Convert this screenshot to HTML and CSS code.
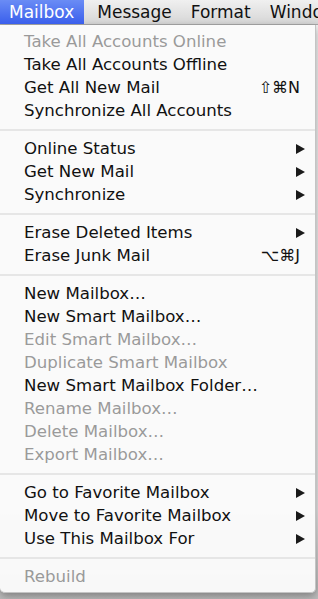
FILE: index.html
```html
<!DOCTYPE html>
<html>
<head>
<meta charset="utf-8">
<link rel="stylesheet" href="styles.css">
</head>
<body>
<div class="menubar">
  <div class="mb-item active">Mailbox</div>
  <div class="mb-item">Message</div>
  <div class="mb-item">Format</div>
  <div class="mb-item">Window</div>
</div>
<div class="menu">
  <div class="row dis"><span>Take All Accounts Online</span></div>
  <div class="row"><span>Take All Accounts Offline</span></div>
  <div class="row"><span>Get All New Mail</span><span class="key">⇧⌘N</span></div>
  <div class="row"><span>Synchronize All Accounts</span></div>
  <div class="sep"></div>
  <div class="row"><span>Online Status</span><span class="arr"></span></div>
  <div class="row"><span>Get New Mail</span><span class="arr"></span></div>
  <div class="row"><span>Synchronize</span><span class="arr"></span></div>
  <div class="sep"></div>
  <div class="row"><span>Erase Deleted Items</span><span class="arr"></span></div>
  <div class="row"><span>Erase Junk Mail</span><span class="key">⌥⌘J</span></div>
  <div class="sep"></div>
  <div class="row"><span>New Mailbox…</span></div>
  <div class="row"><span>New Smart Mailbox…</span></div>
  <div class="row dis"><span>Edit Smart Mailbox…</span></div>
  <div class="row dis"><span>Duplicate Smart Mailbox</span></div>
  <div class="row"><span>New Smart Mailbox Folder…</span></div>
  <div class="row dis"><span>Rename Mailbox…</span></div>
  <div class="row dis"><span>Delete Mailbox…</span></div>
  <div class="row dis"><span>Export Mailbox…</span></div>
  <div class="sep"></div>
  <div class="row"><span>Go to Favorite Mailbox</span><span class="arr"></span></div>
  <div class="row"><span>Move to Favorite Mailbox</span><span class="arr"></span></div>
  <div class="row"><span>Use This Mailbox For</span><span class="arr"></span></div>
  <div class="sep"></div>
  <div class="row dis"><span>Rebuild</span></div>
</div>
</body>
</html>
```
FILE: styles.css
```css
html, body {
  margin: 0;
  padding: 0;
}
body {
  width: 318px;
  height: 599px;
  overflow: hidden;
  background: linear-gradient(#f4f4f4, #e6e6e6 85%, #bcbcbc);
  font-family: "DejaVu Sans", "Noto Sans", sans-serif;
  font-size: 16.6px;
  color: #111;
}
.menubar {
  height: 25px;
  display: flex;
  background: linear-gradient(#f0f0f0, #d6d6d6);
  border-bottom: 1px solid #a8a8a8;
  box-sizing: border-box;
  white-space: nowrap;
  overflow: hidden;
}
.mb-item {
  padding: 0 9px 0 10px;
  line-height: 24px;
  font-size: 17px;
  color: #111;
}
.mb-item.active {
  background: linear-gradient(#6a8cf5, #3a5fec);
  color: #fff;
  padding: 0 10px 0 9px;
  margin-right: 3px;
}
.menu {
  width: 316px;
  box-sizing: border-box;
  background: rgba(250, 250, 250, 0.97);
  border-right: 1px solid #c4c4c4;
  border-bottom: 1px solid #c4c4c4;
  border-radius: 0 0 5px 5px;
  box-shadow: 0 3px 8px rgba(0, 0, 0, 0.35);
  padding: 5px 0 4px 0;
}
.row {
  height: 23px;
  display: flex;
  align-items: center;
  justify-content: space-between;
  padding: 0 10px 0 24px;
  white-space: nowrap;
}
.row.dis {
  color: #9a9a9a;
}
.key {
  font-size: 16px;
  margin-right: 5px;
}
.arr {
  width: 0;
  height: 0;
  border-top: 5px solid transparent;
  border-bottom: 5px solid transparent;
  border-left: 9px solid #1a1a1a;
}
.sep {
  height: 15px;
  display: flex;
  align-items: center;
}
.sep::before {
  content: "";
  display: block;
  width: 100%;
  height: 2px;
  background: #e6e6e6;
}
```
